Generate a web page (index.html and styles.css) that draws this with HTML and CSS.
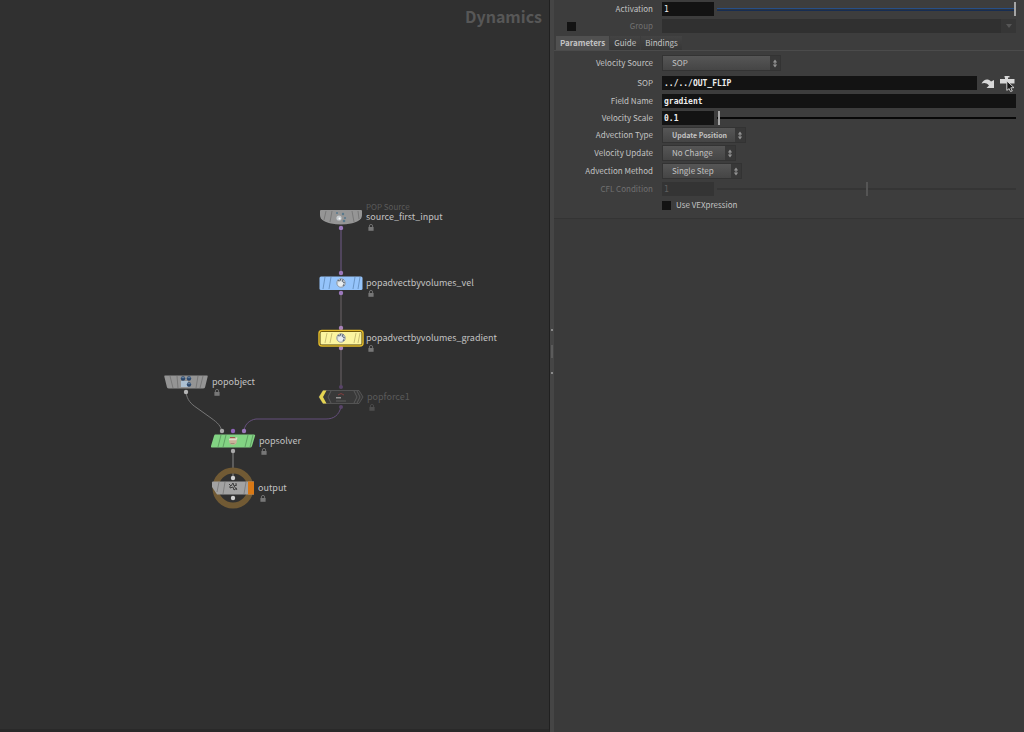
FILE: index.html
```html
<!DOCTYPE html>
<html lang="en">
<head>
<meta charset="utf-8">
<title>Dynamics</title>
<link rel="stylesheet" href="styles.css">
</head>
<body>
<svg class="defs" width="0" height="0" aria-hidden="true">
  <defs>
    <symbol id="lock" viewBox="0 0 6 7">
      <path d="M1.4 3V2a1.6 1.6 0 0 1 3.2 0v1" fill="none" stroke="currentColor" stroke-width="0.9"/>
      <rect x="0.4" y="3" width="5.2" height="3.8" fill="currentColor"/>
    </symbol>
    <symbol id="updown" viewBox="0 0 6 10">
      <path d="M3 0.5L5.4 3.8H0.6zM3 9.5L5.4 6.2H0.6zM2.4 3.5h1.2v3h-1.2z" fill="currentColor"/>
    </symbol>
    <symbol id="ball" viewBox="0 0 12 12">
      <circle cx="6" cy="6" r="4.3" fill="#c4cacf" stroke="#8a9199" stroke-width="0.7"/>
      <path d="M2.6 3.2l2.2 1 1-2.4M8.2 2l-1 2.8 2.6 1" fill="none" stroke="#5a6675" stroke-width="1"/>
      <circle cx="5.6" cy="6.8" r="2.6" fill="#e9edef"/>
      <path d="M7.4 8.4l1.6-1.4.4 2z" fill="#566276"/>
    </symbol>
  </defs>
</svg>
<div class="app">
  <main class="network">
    <h1 class="context">Dynamics</h1>
    <svg class="wires" width="550" height="732" fill="none" aria-hidden="true">
      <path d="M341 228V273" stroke="#715a89"/>
      <path d="M341 293V328M341 348V387" stroke="#6c6568"/>
      <path d="M341 407C339 415 334 419 326 419H256C249 420 244 425 244 432" stroke="#654f7c"/>
      <path d="M186 392C187 400 191 404 197 408L211 418C218 423 221 426 222 432" stroke="#777"/>
      <path d="M233 452V478" stroke="#888"/>
    </svg>
    <div class="node source">
      <svg width="48" height="26" viewBox="-24 -13 48 26">
        <path d="M-20-7H20Q21-7 21-6V-2C21 3 16 5 10 6.5Q0 8.5-10 6.5C-16 5-21 3-21-2V-6Q-21-7-20-7Z" fill="#959595"/>
        <path d="M-15-6L-17 3M-9-6L-11 5M11-6L13 5M17-6L18 2" stroke="#717171" stroke-width="0.8"/>
        <circle cx="-2" cy="1" r="2.6" fill="#c7cdd1"/><circle cx="-1.5" cy="1.4" r="1" fill="#fff"/>
        <g fill="#58788c"><circle cx="-4" cy="-4" r="1"/><circle cx="2" cy="-3" r="1.2"/><circle cx="4" cy="1" r="1.1"/><circle cx="3" cy="4" r="1.3"/></g>
        <circle cy="11" r="2.2" fill="#9c79bd"/>
      </svg>
      <div class="text"><span class="type">POP Source</span><span class="name">source_first_input</span><svg class="lock"><use href="#lock"/></svg></div>
    </div>
    <div class="node vel">
      <svg width="48" height="26" viewBox="-24 -13 48 26">
        <rect x="-21.5" y="-6.5" width="43" height="13.5" rx="1.5" fill="#95c4fb"/>
        <path d="M-16-6L-18 6M-10-6L-12 6M14-6L12 6M19-6L17 6" stroke="#6089b7" stroke-width="0.8"/>
        <use href="#ball" x="-6" y="-6" width="12" height="12"/>
        <circle cy="-10" r="2.2" fill="#9c79bd"/><circle cy="10" r="2.2" fill="#9c79bd"/>
      </svg>
      <div class="text"><span class="name">popadvectbyvolumes_vel</span><svg class="lock"><use href="#lock"/></svg></div>
    </div>
    <div class="node gradient">
      <svg width="48" height="26" viewBox="-24 -13 48 26">
        <circle cy="-10" r="2.2" fill="#a982b8"/><circle cy="10" r="2.2" fill="#a982b8"/>
        <rect x="-22" y="-7.5" width="44" height="15.5" rx="3" fill="#4b3c08" stroke="#e0b92b" stroke-width="1.5"/>
        <rect x="-20.5" y="-6" width="41" height="12.5" rx="1" fill="#fcf5a0"/>
        <path d="M-14-5L-16 5M-9-5L-11 5M15-5L13 5M19-5L17 5" stroke="#beb36b" stroke-width="0.8"/>
        <use href="#ball" x="-6" y="-6" width="12" height="12"/>
      </svg>
      <div class="text"><span class="name">popadvectbyvolumes_gradient</span><svg class="lock"><use href="#lock"/></svg></div>
    </div>
    <div class="node force">
      <svg width="48" height="26" viewBox="-24 -13 48 26">
        <path d="M-18-6.5H18L22 0L18 6.5H-18L-22 0Z" fill="#393939" stroke="#5c5c5c" stroke-width="0.8"/>
        <path d="M-10-6L-13 0L-10 6M13-6L16 0L13 6M16-6L19 0L16 6" fill="none" stroke="#626262" stroke-width="0.8"/>
        <path d="M-18-6.5H-14.5L-18 0L-14.5 6.5H-18L-22 0Z" fill="#e5d451"/>
        <path d="M-5 0.8H0" stroke="#aaa" stroke-width="1.2"/><path d="M-5 4H5" stroke="#5c5c5c"/><path d="M-3-2L0-3.5L3-2" fill="none" stroke="#823e3e"/>
        <circle cy="-10" r="2" fill="#584468"/><circle cy="10" r="2" fill="#584468"/>
      </svg>
      <div class="text"><span class="name">popforce1</span><svg class="lock"><use href="#lock"/></svg></div>
    </div>
    <div class="node object">
      <svg width="48" height="26" viewBox="-24 -13 48 26">
        <path d="M-21-6.5H21Q22-6.5 21.7-5.5L19 5.5Q18.5 6.5 17 6.5H-17Q-18.5 6.5-19 5.5L-21.7-5.5Q-22-6.5-21-6.5Z" fill="#949494"/>
        <path d="M-16-6L-13 6M-9-6L-8 6M12-6L10 6M17-6L14 6" stroke="#707070" stroke-width="0.8"/>
        <rect x="-5" y="-1" width="7" height="6" fill="#adc1d3"/>
        <g fill="#29466b"><circle cx="-3" cy="-3.5" r="2.2"/><circle cx="3" cy="-3.5" r="2.2"/><circle cx="3" cy="2.5" r="2.2"/></g>
        <path d="M-4.5-4.3h3M1.5-4.3h3M1.5 1.7h3" stroke="#7f9bb6" stroke-width="0.8"/>
        <circle cy="10" r="2.2" fill="#b5b5b5"/>
      </svg>
      <div class="text"><span class="name">popobject</span><svg class="lock"><use href="#lock"/></svg></div>
    </div>
    <div class="node solver">
      <svg width="48" height="26" viewBox="-24 -13 48 26">
        <path d="M-18-6.5H21Q22.5-6.5 22-5L19 5Q18.6 6.5 17 6.5H-21Q-22.5 6.5-22 5L-19-5Q-18.6-6.5-18-6.5Z" fill="#82d383"/>
        <path d="M-12-6L-15 6M-7-6L-10 6M15-6L12 6M20-6L17 6" stroke="#57935b" stroke-width="0.8"/>
        <circle cy="0" r="3.8" fill="#c9b299"/><path d="M-4-1.5H3L4-3.5" fill="none" stroke="#e1d7c9" stroke-width="1.4"/><path d="M-3-3.5H2" stroke="#9d574c"/><path d="M-2.5 2.5h4" stroke="#a38b78"/>
        <circle cx="-11" cy="-10" r="2.2" fill="#aaa"/><circle cy="-10" r="2.2" fill="#8f64b9"/><circle cx="11" cy="-10" r="2.2" fill="#9c79bd"/><circle cy="10" r="2.2" fill="#aaa"/>
      </svg>
      <div class="text"><span class="name">popsolver</span><svg class="lock"><use href="#lock"/></svg></div>
    </div>
    <div class="node output">
      <svg width="48" height="42" viewBox="-24 -21 48 42">
        <circle r="17.5" fill="none" stroke="#715a34" stroke-width="6"/>
        <path d="M-20-6.5H21V6.5H-16L-21-1V-5.5Q-21-6.5-20-6.5Z" fill="#a2a2a2"/>
        <path d="M15-6.5h5.5q.5 0 .5.5v12q0 .5-.5.5H15Z" fill="#d87916"/>
        <path d="M-14-6L-16 4M-8-6L-10 6M13-6L11 6" stroke="#777" stroke-width="0.8"/>
        <path d="M-4-4l2 2 2-3 1 3 3-1M-3 0l3-1 1 3 3-2M1-2l3 4M-4-1h2M3-5v2" fill="none" stroke="#333" stroke-width="0.9"/>
        <circle cy="-10" r="2.2" fill="#d0d0d0"/><circle cy="10" r="2.2" fill="#d0d0d0"/>
      </svg>
      <div class="text"><span class="name">output</span><svg class="lock"><use href="#lock"/></svg></div>
    </div>
  </main>
  <div class="splitter"><i></i><b></b><i></i></div>
  <aside class="panel">
    <form class="form">
      <div class="row">
        <label for="activation">Activation</label>
        <div class="control"><input class="field number light" id="activation" value="1"><input class="slider blue" type="range" min="0" max="1" step="any" value="1" aria-label="Activation slider"></div>
      </div>
      <div class="row disabled group">
        <input class="check" type="checkbox" aria-label="Enable group">
        <label for="group">Group</label>
        <div class="control joined"><input class="field" id="group" disabled><button class="drop" type="button" disabled aria-label="Choose group"><svg width="6" height="4"><path d="M0 0H6L3 4Z" fill="#565656"/></svg></button></div>
      </div>
      <div class="tabs">
        <button type="button" class="tab active">Parameters</button><button type="button" class="tab">Guide</button><button type="button" class="tab">Bindings</button>
      </div>
      <div class="parameters">
        <div class="row"><label for="source">Velocity Source</label><div class="control"><span class="menu wide"><select id="source"><option>SOP</option></select><svg><use href="#updown"/></svg></span></div></div>
        <div class="row path"><label for="sop">SOP</label><div class="control"><input class="field" id="sop" value="../../OUT_FLIP">
          <button class="icon" type="button" aria-label="Jump to operator"><svg width="14" height="12" viewBox="0 0 14 12"><path d="M0.5 6.5C3 2 7 1.5 10 4.5L13 3V11H5.5L8 8.4C5.5 5.8 3.5 5.4 0.5 6.5Z" fill="#d8d8d8"/></svg></button>
          <button class="icon" type="button" aria-label="Choose operator"><svg width="17" height="18" viewBox="0 0 17 18"><path d="M5.5 2h5v1.500H9v1.500h6.5v4.500H1V5H6V3.500H5.500Z" fill="#d8d8d8"/><path d="M7.8 7L15 13.6L11.8 13.8L13.3 17L11.4 17.4L10.2 14.6L7.8 16.4Z" fill="#171717" stroke="#ddd" stroke-width="0.9"/></svg></button></div></div>
        <div class="row"><label for="fieldname">Field Name</label><div class="control"><input class="field" id="fieldname" value="gradient"></div></div>
        <div class="row short"><label for="scale">Velocity Scale</label><div class="control"><input class="field number" id="scale" value="0.1"><input class="slider" type="range" min="0" max="50" step="any" value="0.1" aria-label="Velocity scale slider"></div></div>
        <div class="row"><label for="type">Advection Type</label><div class="control"><span class="menu type-menu"><select id="type"><option>Update Position</option></select><svg><use href="#updown"/></svg></span></div></div>
        <div class="row"><label for="update">Velocity Update</label><div class="control"><span class="menu update-menu"><select id="update"><option>No Change</option></select><svg><use href="#updown"/></svg></span></div></div>
        <div class="row"><label for="method">Advection Method</label><div class="control"><span class="menu method-menu"><select id="method"><option>Single Step</option></select><svg><use href="#updown"/></svg></span></div></div>
        <div class="row disabled"><label for="cfl">CFL Condition</label><div class="control"><input class="field number light" id="cfl" value="1" disabled><input class="slider" type="range" min="0" max="2" step="any" value="1" disabled aria-label="CFL condition slider"></div></div>
        <div class="row last"><span></span><div class="control vex"><input class="check" type="checkbox" id="vex"><label for="vex">Use VEXpression</label></div></div>
      </div>
    </form>
  </aside>
</div>
</body>
</html>
```

FILE: styles.css
```css
* { box-sizing: border-box; }
body { margin: 0; background: #3a3a3a; color: #c3c3c3; font: 8px/12px "Noto Sans CJK SC", "Noto Sans", sans-serif; }
.defs { position: absolute; }
.app { display: grid; grid-template-columns: 550fr 4px 470fr; min-height: 100vh; }

.network { position: relative; overflow: hidden; background: #303030; border-right: 1px solid #202020; border-bottom: 3px solid #292929; }
.context { margin: 0; padding: 4px 7px; text-align: right; color: #575757; font-size: 16px; line-height: 24px; font-weight: 700; }
.wires { position: absolute; left: 0; top: 0; }
.node { position: absolute; display: flex; align-items: center; height: 26px; white-space: nowrap; }
.node > svg { flex: none; }
.text { position: relative; padding-left: 1px; }
.name { display: block; color: #c2c2c2; font-size: 9px; line-height: 12px; }
.type { position: absolute; bottom: 12px; color: #5a5a5a; line-height: 8px; }
.lock { position: absolute; left: 3px; top: 13px; width: 6px; height: 7px; color: #777; }
.source { left: 317px; top: 204px; }
.vel { left: 317px; top: 270px; }
.gradient { left: 317px; top: 325px; }
.force { left: 317px; top: 384px; }
.force .text, .object .text, .solver .text { padding-left: 2px; }
.force .lock, .object .lock, .solver .lock { left: 4px; }
.force .name { color: #5a5a5a; }
.force .lock { color: #4d4d4d; }
.object { left: 162px; top: 369px; }
.solver { left: 209px; top: 428px; }
.output { left: 209px; top: 475px; }

.splitter { display: flex; flex-direction: column; align-items: center; justify-content: center; gap: 14px; height: 100vh; padding-bottom: 30px; background: #454545; }
.splitter i { width: 2px; height: 2px; background: #8a8a8a; }
.splitter b { width: 2px; height: 13px; background: #5b5b5b; }

.panel { background: #3a3a3a; }
.form { background: #3d3d3d; border-bottom: 1px solid #343434; padding-bottom: 6px; }
.row { position: relative; display: grid; grid-template-columns: 99px 1fr; column-gap: 9px; align-items: center; height: 18px; padding-right: 8px; }
.row > label { text-align: right; }
.row.short { height: 16px; }
.row.last { height: 14px; }
.row.path { margin-top: 2px; }
.group { height: 16px; }
.group > .check { position: absolute; left: 13px; }
.disabled label { color: #707070; }
.control { display: flex; align-items: center; min-width: 0; }
input, select, button { margin: 0; border: 0; border-radius: 0; appearance: none; font: inherit; color: inherit; }
.field { flex: 1; min-width: 0; height: 14px; padding: 1px 2px 0; background: #131313; color: #eee; font: bold 8px/13px "DejaVu Sans Mono", monospace; }
.number { flex: 0 0 52px; }
.light { font-weight: 400; }
.field:disabled { background: #343434; color: #606060; }
.joined { background: #303030; }
.joined .field:disabled { background: #303030; }
.drop { display: grid; place-items: center; width: 15px; height: 14px; padding: 0; background: #363636; }
.check { width: 9px; height: 9px; background: #131313; }
.slider { flex: 1; min-width: 0; height: 16px; margin-left: 3px; background: none; }
.slider::-webkit-slider-runnable-track { height: 2px; background: #080808; }
.slider::-webkit-slider-thumb { appearance: none; width: 2px; height: 14px; margin-top: -6px; background: #a5a5a5; }
.blue::-webkit-slider-runnable-track { height: 3px; background: linear-gradient(#274f87 0 1px, #2b3340 1px 2px, #172d52 2px); }
.slider:disabled::-webkit-slider-runnable-track { background: #353535; }
.slider:disabled::-webkit-slider-thumb { background: #555; }

.tabs { display: flex; align-items: flex-end; height: 17px; padding: 2px 0 0 2px; border-bottom: 1px solid #4b4b4b; }
.tab { height: 14px; padding: 0 4px; margin-right: 1px; background: linear-gradient(#434343, #373737); line-height: 14px; white-space: nowrap; }
.tab.active { background: #505050; font-weight: 700; }
.parameters { padding-top: 3px; }
.menu { position: relative; display: block; height: 16px; border: 1px solid #333; }
.menu select { width: 100%; height: 14px; padding: 0 0 0 9px; background: linear-gradient(90deg, transparent calc(100% - 10px), #383838 calc(100% - 10px)), linear-gradient(#565656, #454545); line-height: 14px; display: block; }
.menu svg { position: absolute; right: 2px; top: 3px; width: 6px; height: 9px; pointer-events: none; color: #929292; }
.wide { width: 119px; }
.type-menu { width: 84px; }
.type-menu select { font-size: 7px; font-weight: 700; }
.update-menu { width: 74px; }
.method-menu { width: 80px; }
.icon { display: grid; place-items: center; height: 18px; padding: 0; margin-left: 4px; background: none; }
.vex { gap: 5px; }
```
